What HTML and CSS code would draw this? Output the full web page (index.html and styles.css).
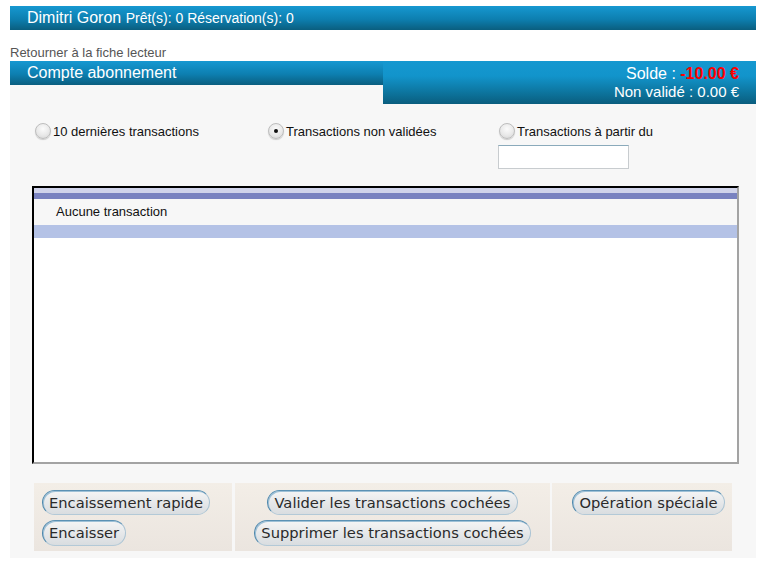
FILE: index.html
```html
<!DOCTYPE html>
<html lang="fr">
<head>
<meta charset="utf-8">
<title>Compte abonnement</title>
<link rel="stylesheet" href="styles.css">
</head>
<body>
<div class="page">
  <div class="topbar"><span class="name">Dimitri Goron</span> <span class="counts">Prêt(s): 0 Réservation(s): 0</span></div>
  <div class="back"><a href="#">Retourner à la fiche lecteur</a></div>
  <div class="section-head">
    <div class="title">Compte abonnement</div>
    <div class="balance">
      <div class="solde">Solde : <strong class="neg">-10.00 €</strong></div>
      <div>Non validé : 0.00 €</div>
    </div>
  </div>
  <div class="panel">
    <div class="filters">
      <label class="opt"><input type="radio" name="f" class="radio"><span>10 dernières transactions</span></label>
      <label class="opt"><input type="radio" name="f" class="radio" checked><span>Transactions non validées</span></label>
      <div class="opt-col">
        <label class="opt"><input type="radio" name="f" class="radio"><span>Transactions à partir du</span></label>
        <input type="text" class="date">
      </div>
    </div>
    <div class="list">
      <div class="band-light"></div>
      <div class="band-dark"></div>
      <div class="row-empty">Aucune transaction</div>
      <div class="row-blue"></div>
    </div>
    <div class="actions">
      <div class="group g1">
        <button class="btn">Encaissement rapide</button>
        <button class="btn">Encaisser</button>
      </div>
      <div class="group g2">
        <button class="btn">Valider les transactions cochées</button>
        <button class="btn">Supprimer les transactions cochées</button>
      </div>
      <div class="group g3">
        <button class="btn">Opération spéciale</button>
      </div>
    </div>
  </div>
</div>
</body>
</html>
```

FILE: styles.css
```css
html, body {
  margin: 0;
  padding: 0;
  background: #ffffff;
}
body {
  font-family: "Liberation Sans", Arial, sans-serif;
  color: #111;
}
.page {
  margin: 6px 8px 0 10px;
}
.topbar {
  height: 24px;
  line-height: 24px;
  background: linear-gradient(#1698d1, #0d7fb0 55%, #0a5e7f);
  color: #fff;
  padding-left: 17px;
  white-space: nowrap;
}
.topbar .name {
  font-size: 16px;
}
.topbar .counts {
  font-size: 14px;
}
.back {
  padding-top: 15px;
  line-height: 16px;
  font-size: 13px;
}
.back a {
  color: #555;
  text-decoration: none;
}
.section-head {
  display: flex;
  align-items: flex-start;
  background: #f7f7f7;
}
.title {
  width: 356px;
  height: 24px;
  line-height: 24px;
  padding-left: 17px;
  font-size: 16px;
  color: #fff;
  background: linear-gradient(#1698d1, #0d7fb0 55%, #0a5e7f);
}
.balance {
  flex: 1;
  height: 39px;
  padding: 4px 17px 0 0;
  text-align: right;
  font-size: 15px;
  line-height: 18px;
  color: #fff;
  background: linear-gradient(#1598d0, #1294cb 35%, #0c6f96 80%, #0a5d7e);
}
.solde {
  font-size: 16px;
}
.neg {
  color: #ff0000;
}
.panel {
  background: #f7f7f7;
  padding: 19px 0 7px 0;
}
.filters {
  display: grid;
  grid-template-columns: 233px 231px auto;
  padding-left: 25px;
  font-size: 13px;
}
.opt {
  display: flex;
  align-items: center;
  gap: 2px;
  height: 16px;
}
.opt-col {
  display: flex;
  flex-direction: column;
}
.radio {
  appearance: none;
  -webkit-appearance: none;
  margin: 0;
  width: 16px;
  height: 16px;
  border-radius: 50%;
  border: 1px solid #bdbdbd;
  background: radial-gradient(circle at 50% 35%, #fbfbfb 0%, #e9e9e9 55%, #d2d2d2 100%);
  box-shadow: 0 1px 1px rgba(0, 0, 0, 0.18);
  position: relative;
  flex: none;
}
.radio:checked::after {
  content: "";
  position: absolute;
  left: 5px;
  top: 5px;
  width: 4px;
  height: 4px;
  border-radius: 50%;
  background: #111;
}
.date {
  margin: 6px 0 0 -1px;
  width: 129px;
  height: 22px;
  padding: 0;
  border: 1px solid #c8cccf;
  border-top-color: #8aaabb;
  background: #fff;
}
.list {
  margin: 17px 0 0 22px;
  width: 703px;
  height: 274px;
  border-top: 2px solid #000;
  border-left: 2px solid #000;
  border-right: 2px solid #a3a3a3;
  border-bottom: 2px solid #a3a3a3;
  background: #fff;
}
.band-light {
  height: 5px;
  background: #d0d3ea;
}
.band-dark {
  height: 6px;
  background: #7982c0;
}
.row-empty {
  height: 26px;
  line-height: 26px;
  padding-left: 22px;
  font-size: 13px;
  background: #f7f7f7;
}
.row-blue {
  height: 13px;
  background: #b4c2e6;
}
.actions {
  display: flex;
  margin: 19px 0 0 24px;
  height: 68px;
}
.group {
  display: flex;
  flex-direction: column;
  gap: 5px;
  padding-top: 7px;
  box-sizing: border-box;
  background: linear-gradient(#f3eee7, #ebe5df);
}
.g1 {
  width: 198px;
  padding-left: 8px;
  align-items: flex-start;
  margin-right: 3px;
}
.g2 {
  width: 315px;
  align-items: center;
  margin-right: 2px;
}
.g3 {
  width: 180px;
  align-items: center;
  padding-left: 13px;
}
.btn {
  font-family: "DejaVu Sans", sans-serif;
  font-size: 14.7px;
  color: #2a2a2a;
  height: 25px;
  padding: 0 6px;
  margin: 0;
  border-radius: 13px;
  border: 1px solid;
  border-color: #5b91b4 #a8c2d3 #b3c9d7 #4a85ab;
  box-shadow: inset 1px 1px 0 #9ec0d6;
  background: linear-gradient(#f5f5f5, #e6e8ea 50%, #d9dde0);
  white-space: nowrap;
  line-height: 22px;
}
.g1 .btn + .btn,
.g2 .btn + .btn {
  height: 26px;
}
```
